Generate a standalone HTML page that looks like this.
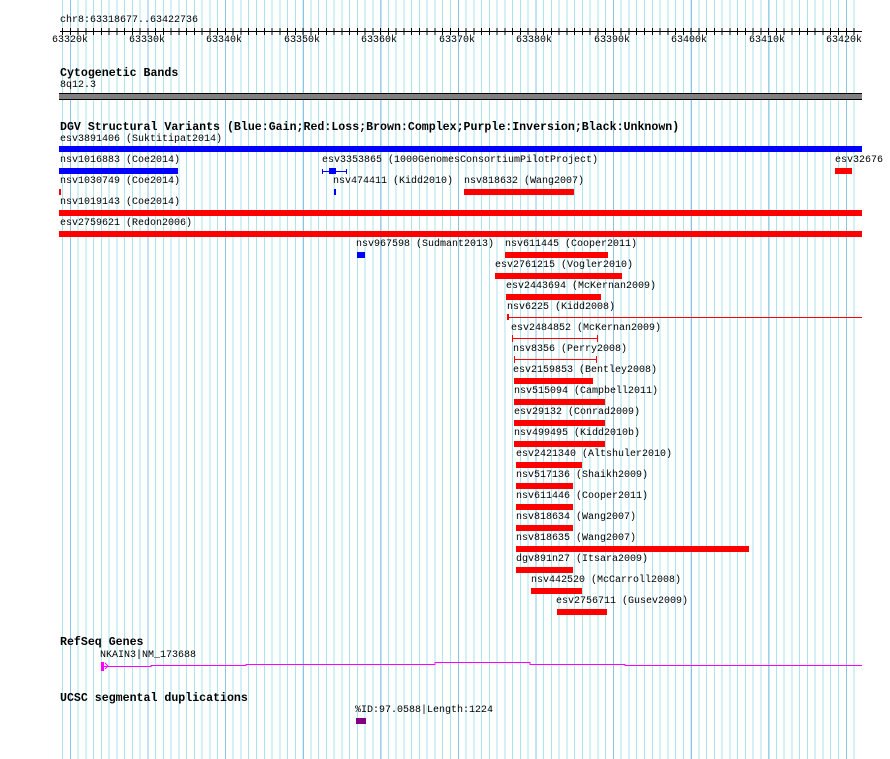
<!DOCTYPE html>
<html><head><meta charset="utf-8"><style>
html,body{margin:0;padding:0;background:#fff}
#c{position:relative;width:890px;height:759px;overflow:hidden;background:#fff}
.g1{position:absolute;left:62px;top:0;width:796px;height:759px;background:repeating-linear-gradient(90deg,#a8e6ee 0,#a8e6ee 1px,transparent 1px,transparent 7.76px)}
.g2{position:absolute;left:70px;top:0;width:792px;height:759px;background:repeating-linear-gradient(90deg,#88c4e4 0,#88c4e4 1px,transparent 1px,transparent 77.6px)}
.t{position:absolute;font-family:"Liberation Mono",monospace;font-size:10px;line-height:12px;white-space:pre;color:#000}
.b{position:absolute;font-family:"Liberation Mono",monospace;font-weight:bold;font-size:11.6px;line-height:13px;white-space:pre;color:#000}
.r{position:absolute;background:#f00}
.bl{position:absolute;background:#00f}
</style></head><body><div id="c">
<div class="g1"></div><div class="g2"></div>

<div class="t" style="left:60px;top:15px">chr8:63318677..63422736</div>
<div style="position:absolute;left:60px;top:31px;width:802px;height:1px;background:#000"></div>
<div style="position:absolute;left:62px;top:28px;width:796px;height:7px;background:repeating-linear-gradient(90deg,#000 0,#000 1px,transparent 1px,transparent 7.76px)"></div>
<div class="t" style="left:52px;top:35px">63320k</div>
<div class="t" style="left:129px;top:35px">63330k</div>
<div class="t" style="left:206px;top:35px">63340k</div>
<div class="t" style="left:284px;top:35px">63350k</div>
<div class="t" style="left:361px;top:35px">63360k</div>
<div class="t" style="left:439px;top:35px">63370k</div>
<div class="t" style="left:516px;top:35px">63380k</div>
<div class="t" style="left:594px;top:35px">63390k</div>
<div class="t" style="left:671px;top:35px">63400k</div>
<div class="t" style="left:749px;top:35px">63410k</div>
<div class="t" style="left:826px;top:35px">63420k</div>

<div class="b" style="left:60px;top:67px">Cytogenetic Bands</div>
<div class="t" style="left:60px;top:80px">8q12.3</div>
<div style="position:absolute;left:59px;top:93px;width:803px;height:7px;background:#808080;border-top:1px solid #000;box-sizing:border-box;border-bottom:1px solid #000"></div>

<div class="b" style="left:60px;top:121px">DGV Structural Variants (Blue:Gain;Red:Loss;Brown:Complex;Purple:Inversion;Black:Unknown)</div>
<div class="t" style="left:60px;top:134px">esv3891406 (Suktitipat2014)</div>
<div class="bl" style="left:59px;top:146px;width:803px;height:6px"></div>

<div class="t" style="left:60px;top:155px">nsv1016883 (Coe2014)</div>
<div class="bl" style="left:59px;top:168px;width:119px;height:6px"></div>
<div class="t" style="left:322px;top:155px">esv3353865 (1000GenomesConsortiumPilotProject)</div>
<div class="bl" style="left:322px;top:171px;width:25px;height:1px"></div>
<div class="bl" style="left:322px;top:169px;width:1px;height:5px"></div>
<div class="bl" style="left:346px;top:169px;width:1px;height:5px"></div>
<div class="bl" style="left:329px;top:168px;width:7px;height:6px"></div>
<div class="t" style="left:835px;top:155px">esv32676</div>
<div class="r" style="left:835px;top:168px;width:17px;height:6px"></div>

<div class="t" style="left:60px;top:176px">nsv1030749 (Coe2014)</div>
<div class="r" style="left:59px;top:189px;width:2px;height:6px"></div>
<div class="t" style="left:333px;top:176px">nsv474411 (Kidd2010)</div>
<div class="bl" style="left:334px;top:189px;width:2px;height:6px"></div>
<div class="t" style="left:464px;top:176px">nsv818632 (Wang2007)</div>
<div class="r" style="left:464px;top:189px;width:110px;height:6px"></div>

<div class="t" style="left:60px;top:197px">nsv1019143 (Coe2014)</div>
<div class="r" style="left:59px;top:210px;width:803px;height:6px"></div>
<div class="t" style="left:60px;top:218px">esv2759621 (Redon2006)</div>
<div class="r" style="left:59px;top:231px;width:803px;height:6px"></div>

<div class="t" style="left:356px;top:239px">nsv967598 (Sudmant2013)</div>
<div class="bl" style="left:357px;top:252px;width:8px;height:6px"></div>
<div class="t" style="left:505px;top:239px">nsv611445 (Cooper2011)</div>
<div class="r" style="left:505px;top:252px;width:103px;height:6px"></div>
<div class="t" style="left:495px;top:260px">esv2761215 (Vogler2010)</div>
<div class="r" style="left:495px;top:273px;width:127px;height:6px"></div>
<div class="t" style="left:506px;top:281px">esv2443694 (McKernan2009)</div>
<div class="r" style="left:506px;top:294px;width:95px;height:6px"></div>
<div class="t" style="left:507px;top:302px">nsv6225 (Kidd2008)</div>
<div class="r" style="left:507px;top:317px;width:355px;height:1px"></div>
<div class="r" style="left:507px;top:314px;width:2px;height:6px"></div>
<div class="t" style="left:511px;top:323px">esv2484852 (McKernan2009)</div>
<div class="r" style="left:512px;top:338px;width:86px;height:1px"></div>
<div class="r" style="left:512px;top:335px;width:1px;height:7px"></div>
<div class="r" style="left:597px;top:335px;width:1px;height:7px"></div>
<div class="t" style="left:513px;top:344px">nsv8356 (Perry2008)</div>
<div class="r" style="left:514px;top:359px;width:83px;height:1px"></div>
<div class="r" style="left:514px;top:356px;width:1px;height:7px"></div>
<div class="r" style="left:596px;top:356px;width:1px;height:7px"></div>
<div class="t" style="left:513px;top:365px">esv2159853 (Bentley2008)</div>
<div class="r" style="left:514px;top:378px;width:79px;height:6px"></div>
<div class="t" style="left:514px;top:386px">nsv515094 (Campbell2011)</div>
<div class="r" style="left:514px;top:399px;width:91px;height:6px"></div>
<div class="t" style="left:514px;top:407px">esv29132 (Conrad2009)</div>
<div class="r" style="left:514px;top:420px;width:91px;height:6px"></div>
<div class="t" style="left:514px;top:428px">nsv499495 (Kidd2010b)</div>
<div class="r" style="left:514px;top:441px;width:91px;height:6px"></div>
<div class="t" style="left:516px;top:449px">esv2421340 (Altshuler2010)</div>
<div class="r" style="left:516px;top:462px;width:66px;height:6px"></div>
<div class="t" style="left:516px;top:470px">nsv517136 (Shaikh2009)</div>
<div class="r" style="left:516px;top:483px;width:57px;height:6px"></div>
<div class="t" style="left:516px;top:491px">nsv611446 (Cooper2011)</div>
<div class="r" style="left:516px;top:504px;width:57px;height:6px"></div>
<div class="t" style="left:516px;top:512px">nsv818634 (Wang2007)</div>
<div class="r" style="left:516px;top:525px;width:57px;height:6px"></div>
<div class="t" style="left:516px;top:533px">nsv818635 (Wang2007)</div>
<div class="r" style="left:516px;top:546px;width:233px;height:6px"></div>
<div class="t" style="left:516px;top:554px">dgv891n27 (Itsara2009)</div>
<div class="r" style="left:516px;top:567px;width:57px;height:6px"></div>
<div class="t" style="left:531px;top:575px">nsv442520 (McCarroll2008)</div>
<div class="r" style="left:531px;top:588px;width:51px;height:6px"></div>
<div class="t" style="left:556px;top:596px">esv2756711 (Gusev2009)</div>
<div class="r" style="left:557px;top:609px;width:50px;height:6px"></div>

<div class="b" style="left:60px;top:636px">RefSeq Genes</div>
<div class="t" style="left:100px;top:650px">NKAIN3|NM_173688</div>
<svg style="position:absolute;left:0;top:0" width="890" height="759">
<rect x="101" y="662" width="3" height="9" fill="#f0f"/>
<polyline points="105,663 108,666 105,669" fill="none" stroke="#f0f" stroke-width="1"/>
<polyline points="104,666.5 151,666.5 151,665.5 246,665.5 246,664.5 435,664.5 435,662.5 530,662.5 530,664.5 625,664.5 625,665.5 862,665.5" fill="none" stroke="#f0f" stroke-width="1"/>
</svg>

<div class="b" style="left:60px;top:692px">UCSC segmental duplications</div>
<div class="t" style="left:355px;top:705px">%ID:97.0588|Length:1224</div>
<div style="position:absolute;left:356px;top:718px;width:10px;height:6px;background:#800080"></div>
</div></body></html>
